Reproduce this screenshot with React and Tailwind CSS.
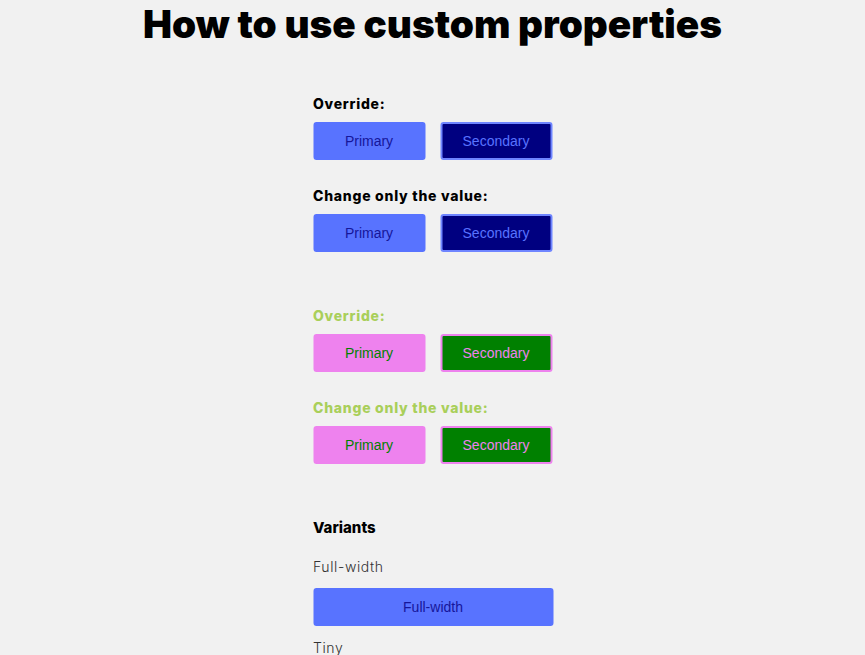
const GROUPS = [
  {
    label: 'text-black',
    primary: 'bg-[#5873ff] text-[#16169a] border-[#5873ff]',
    secondary: 'bg-[#000080] text-[#5873ff] border-[#6f85ff]',
  },
  {
    label: 'text-[#a9cf5a]',
    primary: 'bg-[#ee82ee] text-[#008000] border-[#ee82ee]',
    secondary: 'bg-[#008000] text-[#ee82ee] border-[#ee82ee]',
  },
];

const heading = "font-['Inter',sans-serif] font-extrabold text-[14px] leading-[22px] tracking-[0.75px]";
const btnText = "font-['Liberation_Sans',Arial,sans-serif] text-[14px]";

function ButtonRow({ group }) {
  return (
    <div className="mt-[7px] flex gap-[15px]">
      <button
        type="button"
        className={`h-[38px] w-[112px] rounded-[3px] border-2 ${btnText} ${group.primary}`}
      >
        Primary
      </button>
      <button
        type="button"
        className={`h-[38px] w-[112px] rounded-[3px] border-2 ${btnText} ${group.secondary}`}
      >
        Secondary
      </button>
    </div>
  );
}

function Group({ group, first }) {
  return (
    <section className={first ? 'mt-[45px]' : 'mt-[53px]'}>
      <h2 className={`${heading} ${group.label}`}>Override:</h2>
      <ButtonRow group={group} />
      <h2 className={`${heading} ${group.label} mt-[25px]`}>Change only the value:</h2>
      <ButtonRow group={group} />
    </section>
  );
}

export default function App() {
  return (
    <div className="min-h-screen bg-[#f1f1f1] text-[#333]">
      <h1 className="text-center font-['Inter',sans-serif] text-[38.7px] font-black leading-[48px] text-black">
        How to use custom properties
      </h1>

      <div className="mx-auto w-[240px] translate-x-[0.5px]">
        {GROUPS.map((group, index) => (
          <Group key={index} group={group} first={index === 0} />
        ))}

        <section className="mt-[52px]">
          <h2 className="font-['Inter',sans-serif] text-[15px] font-extrabold leading-[24px] text-black">Variants</h2>
          <p className="mt-[16px] font-['Inter',sans-serif] text-[14px] font-light leading-[22px] tracking-[0.6px] text-[#333]">Full-width</p>
          <button
            type="button"
            className={`mt-[10px] h-[38px] w-full rounded-[3px] border-2 border-[#5873ff] bg-[#5873ff] text-[#16169a] ${btnText}`}
          >
            Full-width
          </button>
          <p className="mt-[12px] font-['Inter',sans-serif] text-[14px] font-light leading-5 tracking-[0.6px] text-[#333]">Tiny</p>
        </section>
      </div>
    </div>
  );
}
